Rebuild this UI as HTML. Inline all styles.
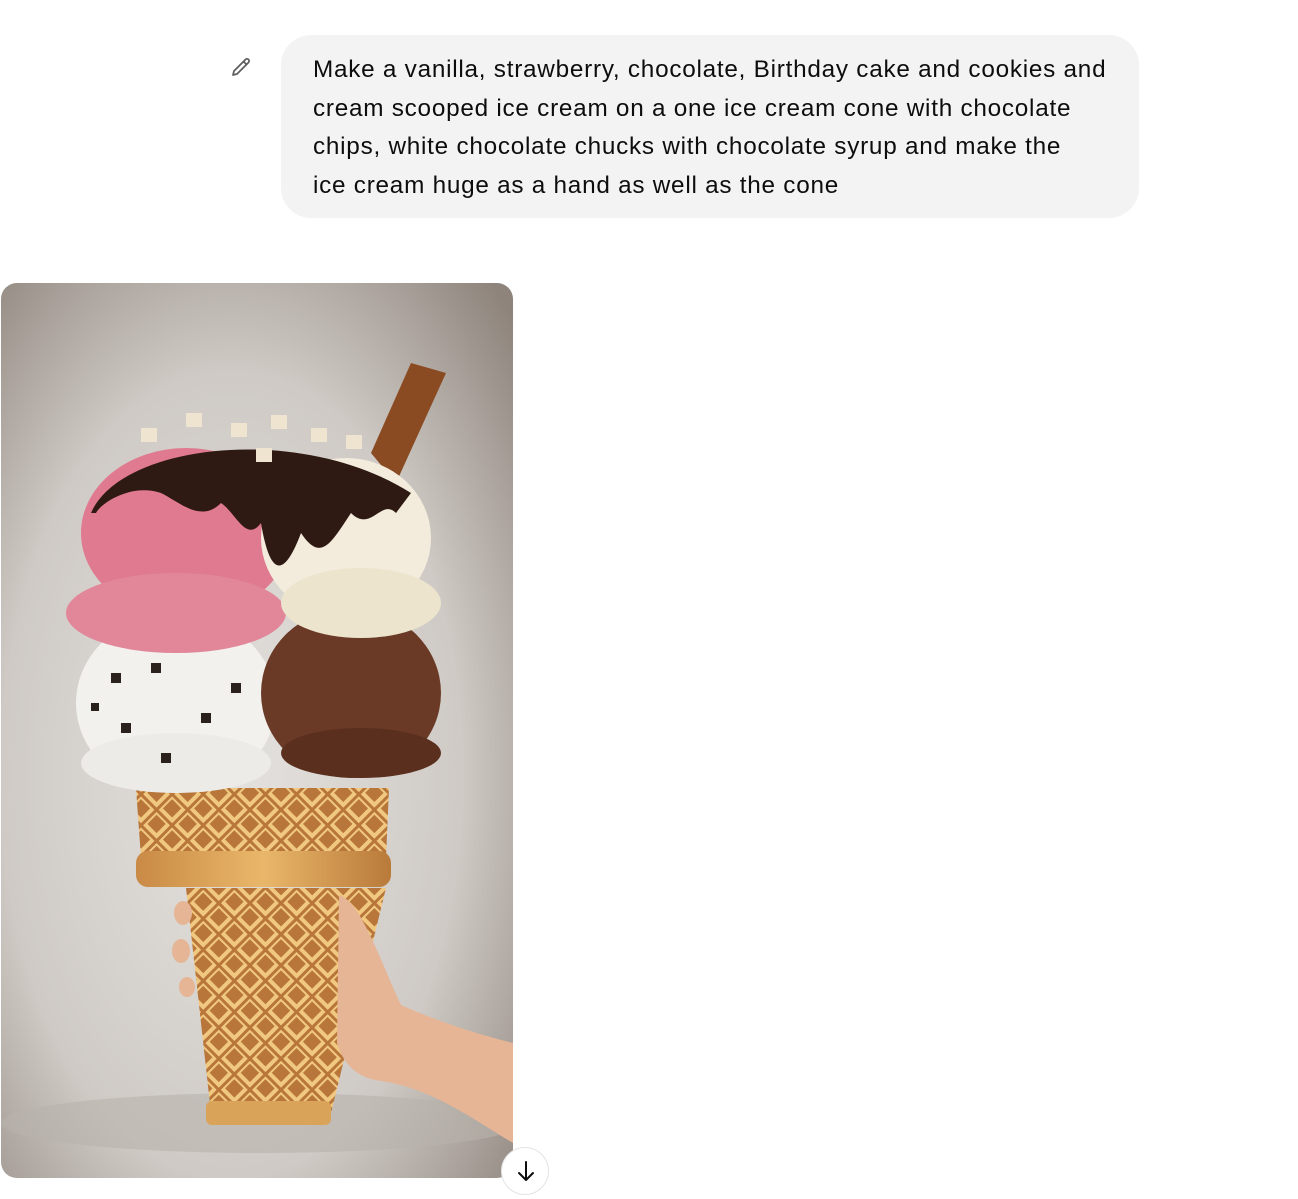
<!DOCTYPE html>
<html><head><meta charset="utf-8"><style>
html,body{margin:0;padding:0;background:#fff;width:1298px;height:1188px;overflow:hidden;font-family:"Liberation Sans",sans-serif;}
.bubble{position:absolute;left:281px;top:35px;width:858px;height:183px;background:#f3f3f3;border-radius:30px;box-sizing:border-box;padding:16px 0 0 32px;font-size:24.3px;line-height:38.5px;color:#0d0d0d;white-space:nowrap;letter-spacing:0.75px}
.pen{position:absolute;left:229px;top:56px}
.img{position:absolute;left:1px;top:283px;width:512px;height:895px;border-radius:16px;overflow:hidden}
.dl{position:absolute;left:501px;top:1147px;width:48px;height:48px;border-radius:50%;background:#fff;border:1px solid #e3e3e3;box-sizing:border-box}
</style></head><body>
<svg class="pen" width="24" height="24" viewBox="0 0 24 24" fill="none" stroke="#5d5d5d" stroke-width="1.7" stroke-linejoin="round"><path d="M16.5 3.5a2.1 2.1 0 0 1 3 3L8 18l-4 1 1-4z"/><path d="M14.5 5.5l3 3"/></svg>
<div class="bubble">Make a vanilla, strawberry, chocolate, Birthday cake and cookies and<br>cream scooped ice cream on a one ice cream cone with chocolate<br>chips, white chocolate chucks with chocolate syrup and make the<br>ice cream huge as a hand as well as the cone</div>
<div class="img">
<svg width="512" height="895" viewBox="0 0 512 895">
<defs>
<radialGradient id="bg" cx="0.45" cy="0.55" r="0.75"><stop offset="0" stop-color="#e4e2df"/><stop offset="0.6" stop-color="#cfcac5"/><stop offset="1" stop-color="#8e847c"/></radialGradient>
<linearGradient id="cone" x1="0" x2="1"><stop offset="0" stop-color="#c98a45"/><stop offset="0.5" stop-color="#e9b76a"/><stop offset="1" stop-color="#b97a3a"/></linearGradient>
<pattern id="waf" width="22" height="22" patternUnits="userSpaceOnUse" patternTransform="rotate(45)"><rect width="22" height="22" fill="#b8763a"/><rect width="17" height="17" fill="none" stroke="#f0c880" stroke-width="4"/></pattern>
</defs>
<rect width="512" height="895" fill="url(#bg)"/>
<ellipse cx="260" cy="840" rx="260" ry="30" fill="#b8b2ac" opacity=".6"/>
<path d="M370 170 L410 80 L445 90 L395 200z" fill="#8a4a22"/>
<path d="M185 605 L385 605 L330 830 L210 830z" fill="url(#waf)"/>
<rect x="205" y="818" width="125" height="24" rx="6" fill="#d9a35a"/>
<path d="M135 505 L388 505 L385 575 L140 575z" fill="url(#waf)"/>
<rect x="135" y="568" width="255" height="36" rx="12" fill="url(#cone)"/>
<path d="M338 612 C360 618 380 680 400 722 C440 740 480 752 512 760 L512 860 C470 835 430 805 380 798 C355 795 342 780 336 760z" fill="#e6b595"/>
<ellipse cx="182" cy="630" rx="9" ry="12" fill="#e6b595"/>
<ellipse cx="180" cy="668" rx="9" ry="12" fill="#e6b595"/>
<ellipse cx="186" cy="704" rx="8" ry="10" fill="#e6b595"/>
<ellipse cx="175" cy="420" rx="100" ry="90" fill="#f3f1ee"/>
<ellipse cx="175" cy="480" rx="95" ry="30" fill="#ecebe8"/>
<g fill="#2a201c"><rect x="110" y="390" width="10" height="10"/><rect x="150" y="380" width="10" height="10"/><rect x="200" y="430" width="10" height="10"/><rect x="120" y="440" width="10" height="10"/><rect x="230" y="400" width="10" height="10"/><rect x="180" y="350" width="10" height="10"/><rect x="90" y="420" width="8" height="8"/><rect x="160" y="470" width="10" height="10"/></g>
<ellipse cx="350" cy="410" rx="90" ry="85" fill="#6b3a26"/>
<ellipse cx="360" cy="470" rx="80" ry="25" fill="#5a2f1e"/>
<ellipse cx="185" cy="250" rx="105" ry="85" fill="#e07a90"/>
<ellipse cx="175" cy="330" rx="110" ry="40" fill="#e2879a"/>
<ellipse cx="345" cy="255" rx="85" ry="80" fill="#f3ecdc"/>
<ellipse cx="360" cy="320" rx="80" ry="35" fill="#ece4cc"/>
<path d="M90 230 C120 160 300 140 410 210 L395 230 C380 215 370 250 350 230 C330 260 320 280 300 250 C285 290 270 300 260 240 C245 260 235 230 220 220 C200 240 180 220 160 210 C130 200 100 220 95 230z" fill="#2e1a12"/>
<g fill="#efe4cf"><rect x="140" y="145" width="16" height="14"/><rect x="185" y="130" width="16" height="14"/><rect x="230" y="140" width="16" height="14"/><rect x="270" y="132" width="16" height="14"/><rect x="310" y="145" width="16" height="14"/><rect x="345" y="152" width="16" height="14"/><rect x="255" y="165" width="16" height="14"/></g>
</svg>
</div>
<div class="dl"><svg width="46" height="46" viewBox="0 0 46 46" fill="none" stroke="#0d0d0d" stroke-width="2" stroke-linecap="round" stroke-linejoin="round"><path d="M24 14v18M17 25l7 7 7-7"/></svg></div>
</body></html>
